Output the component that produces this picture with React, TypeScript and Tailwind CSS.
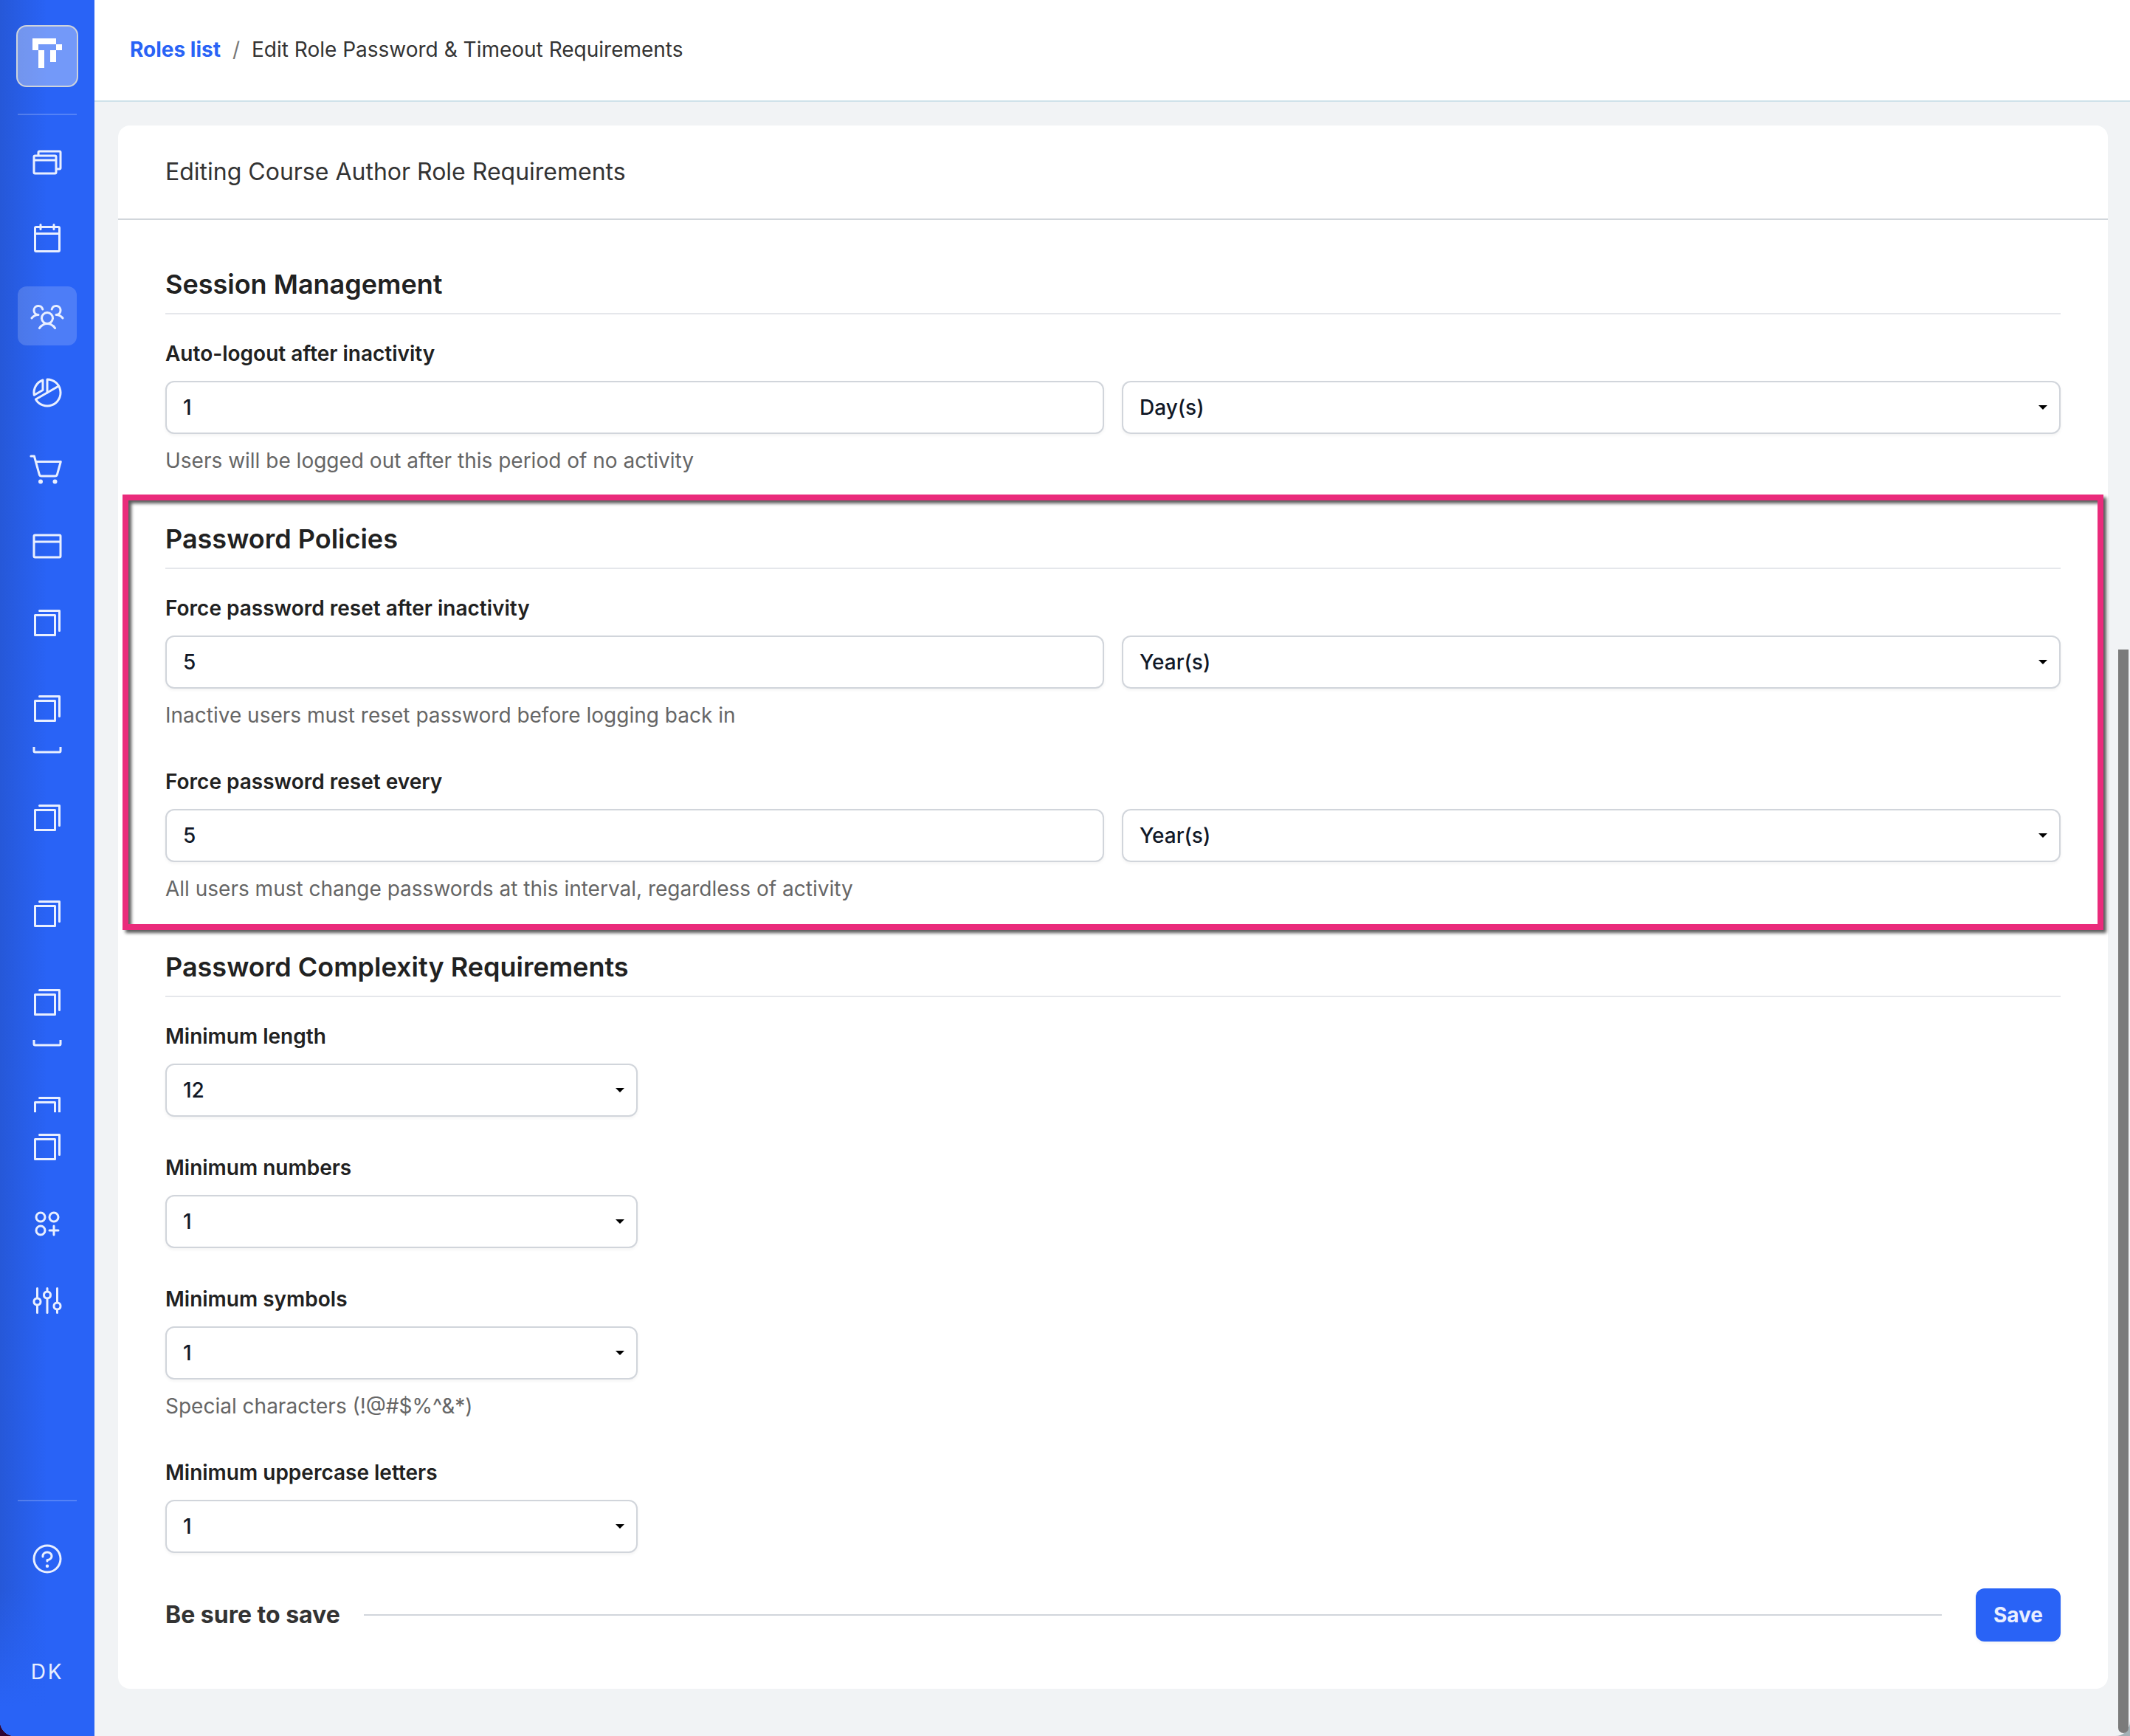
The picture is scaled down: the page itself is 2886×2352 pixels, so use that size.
import type { ComponentType, ReactNode } from 'react';
import {
  PiBrowser,
  PiBrowsers,
  PiCalendarBlank,
  PiCirclesThreePlus,
  PiCopySimple,
  PiQuestion,
  PiSliders,
  PiUsersThree,
} from 'react-icons/pi';
import { clsx } from 'clsx';

type IconType = ComponentType<{ className?: string }>;

interface NavItem {
  label: string;
  icon: IconType;
  active?: boolean;
  className: string;
}

function ReportsIcon({ className }: { className?: string }) {
  return (
    <svg
      viewBox="0 0 256 256"
      fill="none"
      stroke="currentColor"
      strokeWidth="16"
      strokeLinecap="round"
      strokeLinejoin="round"
      className={className}
    >
      <path d="M128 128V32A96 96 0 1 1 44.9 176Z" />
      <path d="M128 128L211.1 80" />
      <path d="M96 37.5V109.5L33.5 145.6A96 96 0 0 1 96 37.5Z" />
    </svg>
  );
}

function CartIcon({ className }: { className?: string }) {
  return (
    <svg
      viewBox="0 0 256 256"
      fill="none"
      stroke="currentColor"
      strokeWidth="16"
      strokeLinecap="round"
      strokeLinejoin="round"
      className={className}
    >
      <path d="M10 32H34L71 164.3A16 16 0 0 0 86.4 176H184.3A16 16 0 0 0 199.7 164.3L225.6 72H45.2" />
      <circle cx="80" cy="216" r="16" fill="currentColor" stroke="none" />
      <circle cx="184" cy="216" r="16" fill="currentColor" stroke="none" />
    </svg>
  );
}

function LogoMark() {
  return (
    <svg viewBox="0 0 40 40" shapeRendering="crispEdges" className="size-10" aria-hidden="true">
      <path
        fill="#fff"
        d="M0 0H32V8H8V16H0ZM32 8H40V16H32ZM8 16H16V40H8ZM24 16H32V32H24Z"
      />
    </svg>
  );
}

const navItems: NavItem[] = [
  { label: 'Dashboard', icon: PiBrowsers, className: 'h-20 mt-6' },
  { label: 'Calendar', icon: PiCalendarBlank, className: 'h-20 mt-6' },
  { label: 'Users', icon: PiUsersThree, active: true, className: 'h-20 mt-6' },
  { label: 'Reports', icon: ReportsIcon, className: 'h-20 mt-6' },
  { label: 'Store', icon: CartIcon, className: 'h-20 mt-6' },
  { label: 'Pages', icon: PiBrowser, className: 'h-20 mt-6' },
  { label: 'Courses', icon: PiCopySimple, className: 'h-20 mt-6' },
  { label: 'Content', icon: PiCopySimple, className: 'h-20 mt-9' },
  { label: 'Content pages', icon: PiBrowser, className: 'h-4 mt-3 items-end!' },
  { label: 'Bundles', icon: PiCopySimple, className: 'h-20 mt-10' },
  { label: 'Learning paths', icon: PiCopySimple, className: 'h-20 mt-[50px]' },
  { label: 'Resources', icon: PiCopySimple, className: 'h-20 mt-10' },
  { label: 'Resource pages', icon: PiBrowser, className: 'h-4 mt-[11px] items-end!' },
  { label: 'Templates', icon: PiCopySimple, className: 'h-[27px] mt-[55px] items-start!' },
  { label: 'Assignments', icon: PiCopySimple, className: 'h-20 mt-[7px]' },
  { label: 'Integrations', icon: PiCirclesThreePlus, className: 'h-20 mt-6' },
  { label: 'Settings', icon: PiSliders, className: 'h-20 mt-6' },
];

function Sidebar() {
  return (
    <aside className="flex w-32 shrink-0 flex-col items-center bg-[#2963f6] bg-[linear-gradient(to_top,#2963f6_40px,transparent_200px),linear-gradient(to_right,#2658d8,#2963f6_64px)] pt-[34px] text-[#e9efff]">
      <a
        href="#home"
        aria-label="Home"
        className="flex size-[84px] justify-center rounded-[14px] border-2 border-[#cdd3dc] bg-white/35 pt-4"
      >
        <LogoMark />
      </a>
      <div className="mt-9 h-0.5 w-20 bg-white/20" />
      <nav className="flex flex-col">
        {navItems.map(({ label, icon: Icon, active, className }) => (
          <a
            key={label}
            href="#nav"
            aria-label={label}
            className={clsx(
              'flex w-20 items-center justify-center overflow-hidden',
              active && 'rounded-xl bg-white/17',
              className
            )}
          >
            <Icon className="size-12 shrink-0" />
          </a>
        ))}
      </nav>
      <div className="mt-auto h-0.5 w-20 bg-white/20" />
      <a href="#help" aria-label="Help" className="mt-[38px] flex size-20 items-center justify-center">
        <PiQuestion className="size-12" />
      </a>
      <button type="button" className="mt-[92px] mb-[66px] text-[28px] leading-[42px] tracking-widest">
        DK
      </button>
    </aside>
  );
}

const controlClass =
  'h-[72px] w-full appearance-none rounded-xl border-2 border-[#d1d5db] bg-white px-[22px] text-[28px] font-medium text-[#111827] shadow-[0_2px_4px_rgba(0,0,0,0.05)] outline-none focus:border-blue-600';

function Select({ id, value, options, label }: { id: string; value: string; options: string[]; label?: string }) {
  return (
    <div className="relative">
      <select id={id} aria-label={label} defaultValue={value} className={controlClass}>
        {options.map((option) => (
          <option key={option}>{option}</option>
        ))}
      </select>
      <svg
        viewBox="0 0 12 6"
        className="pointer-events-none absolute top-[33px] right-[18px] h-1.5 w-3"
        aria-hidden="true"
      >
        <path d="M0 0H12L6 6Z" fill="#000" />
      </svg>
    </div>
  );
}

function Section({ title, children }: { title: string; children: ReactNode }) {
  return (
    <section className="relative">
      <h2 className="border-b-2 border-[#e5e7eb] pb-3 text-[36px] leading-[54px] font-semibold text-[#212121]">
        {title}
      </h2>
      <div className="mt-8 flex flex-col gap-12">{children}</div>
    </section>
  );
}

function Field({ id, label, help, children }: { id: string; label: string; help?: string; children: ReactNode }) {
  return (
    <div>
      <label htmlFor={id} className="mb-4 block text-[28px] leading-[42px] font-semibold text-[#212121]">
        {label}
      </label>
      {children}
      {help && <p className="mt-[15px] text-[28px] leading-[42px] text-[#666]">{help}</p>}
    </div>
  );
}

const units = ['Minute(s)', 'Hour(s)', 'Day(s)', 'Month(s)', 'Year(s)'];

function DurationField({ id, label, help, amount, unit }: { id: string; label: string; help: string; amount: string; unit: string }) {
  return (
    <Field id={id} label={label} help={help}>
      <div className="grid grid-cols-2 gap-6">
        <input id={id} type="text" inputMode="numeric" defaultValue={amount} className={controlClass} />
        <Select id={`${id}-unit`} label={`${label} unit`} value={unit} options={units} />
      </div>
    </Field>
  );
}

const counts = ['0', '1', '2', '3', '4'];

const complexityFields = [
  { id: 'min-length', label: 'Minimum length', value: '12', options: ['8', '10', '12', '14', '16'] },
  { id: 'min-numbers', label: 'Minimum numbers', value: '1', options: counts },
  { id: 'min-symbols', label: 'Minimum symbols', value: '1', options: counts, help: 'Special characters (!@#$%^&*)' },
  { id: 'min-uppercase', label: 'Minimum uppercase letters', value: '1', options: counts },
];

export default function App() {
  return (
    <div className="min-h-screen bg-[linear-gradient(to_right,#2e0433_50%,#a3b1b6_50%)] font-['Inter',sans-serif]">
      <div className="flex min-h-screen overflow-hidden rounded-b-[20px] bg-[#f1f3f5]">
        <Sidebar />

        <div className="min-w-0 flex-1">
          <header className="border-b-2 border-[#cfe2ea] bg-white pt-[46px] pb-12 pl-12">
            <nav aria-label="Breadcrumb" className="flex gap-4 text-[28px] leading-[42px] text-[#333]">
              <a href="#roles" className="font-bold text-[#2963f6]">
                Roles list
              </a>
              <span className="text-[#777]">/</span>
              <span>Edit Role Password &amp; Timeout Requirements</span>
            </nav>
          </header>

          <main className="py-8 pr-[30px] pb-16 pl-8">
            <form className="rounded-2xl bg-white" onSubmit={(e) => e.preventDefault()}>
              <h1 className="border-b-2 border-[#d1d6db] px-16 py-[39px] text-[32px] leading-[48px] text-[#333]">
                Editing Course Author Role Requirements
              </h1>

              <div className="flex flex-col gap-[58px] px-16 pt-[60px]">
                <Section title="Session Management">
                  <DurationField
                    id="auto-logout"
                    label="Auto-logout after inactivity"
                    help="Users will be logged out after this period of no activity"
                    amount="1"
                    unit="Day(s)"
                  />
                </Section>

                <Section title="Password Policies">
                  <DurationField
                    id="reset-inactive"
                    label="Force password reset after inactivity"
                    help="Inactive users must reset password before logging back in"
                    amount="5"
                    unit="Year(s)"
                  />
                  <DurationField
                    id="reset-every"
                    label="Force password reset every"
                    help="All users must change passwords at this interval, regardless of activity"
                    amount="5"
                    unit="Year(s)"
                  />
                  {/* Highlight frame round the whole section */}
                  <div className="pointer-events-none absolute -inset-x-[58px] -top-[33px] -bottom-[35px] border-8 border-[#ea2b7b] drop-shadow-[4px_4px_2px_rgba(0,0,0,0.65)]" />
                </Section>

                <Section title="Password Complexity Requirements">
                  {complexityFields.map(({ id, label, value, options, help }) => (
                    <Field key={id} id={id} label={label} help={help}>
                      <div className="max-w-[640px]">
                        <Select id={id} value={value} options={options} />
                      </div>
                    </Field>
                  ))}
                </Section>
              </div>

              <div className="flex items-center px-16 pt-12 pb-16">
                <p className="text-[32px] leading-[48px] font-bold text-[#333]">Be sure to save</p>
                <hr className="mr-[46px] ml-8 flex-1 border-t-2 border-[#d1d5db]" />
                <button
                  type="submit"
                  className="h-[72px] rounded-xl bg-[#2963f6] px-6 text-[28px] font-bold text-[#e9efff] shadow-[0_2px_4px_rgba(0,0,0,0.05)]"
                >
                  Save
                </button>
              </div>
            </form>
          </main>
        </div>
      </div>

      {/* Scroll thumb */}
      <div className="pointer-events-none fixed top-[880px] right-0.5 bottom-1 w-3.5 rounded-b-full bg-[#7b7b7b]" />
    </div>
  );
}
